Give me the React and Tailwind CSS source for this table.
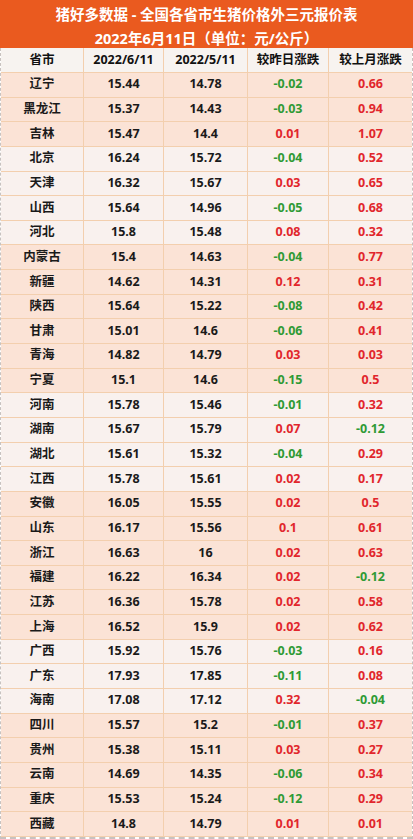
const GROUPS = [
  [
    ["辽宁", "15.44", "14.78", "-0.02", "0.66"],
    ["黑龙江", "15.37", "14.43", "-0.03", "0.94"],
    ["吉林", "15.47", "14.4", "0.01", "1.07"],
  ],
  [
    ["北京", "16.24", "15.72", "-0.04", "0.52"],
    ["天津", "16.32", "15.67", "0.03", "0.65"],
    ["山西", "15.64", "14.96", "-0.05", "0.68"],
    ["河北", "15.8", "15.48", "0.08", "0.32"],
  ],
  [
    ["内蒙古", "15.4", "14.63", "-0.04", "0.77"],
    ["新疆", "14.62", "14.31", "0.12", "0.31"],
    ["陕西", "15.64", "15.22", "-0.08", "0.42"],
    ["甘肃", "15.01", "14.6", "-0.06", "0.41"],
    ["青海", "14.82", "14.79", "0.03", "0.03"],
    ["宁夏", "15.1", "14.6", "-0.15", "0.5"],
  ],
  [
    ["河南", "15.78", "15.46", "-0.01", "0.32"],
    ["湖南", "15.67", "15.79", "0.07", "-0.12"],
    ["湖北", "15.61", "15.32", "-0.04", "0.29"],
    ["江西", "15.78", "15.61", "0.02", "0.17"],
  ],
  [
    ["安徽", "16.05", "15.55", "0.02", "0.5"],
    ["山东", "16.17", "15.56", "0.1", "0.61"],
    ["浙江", "16.63", "16", "0.02", "0.63"],
    ["福建", "16.22", "16.34", "0.02", "-0.12"],
    ["江苏", "16.36", "15.78", "0.02", "0.58"],
    ["上海", "16.52", "15.9", "0.02", "0.62"],
  ],
  [
    ["广西", "15.92", "15.76", "-0.03", "0.16"],
    ["广东", "17.93", "17.85", "-0.11", "0.08"],
    ["海南", "17.08", "17.12", "0.32", "-0.04"],
  ],
  [
    ["四川", "15.57", "15.2", "-0.01", "0.37"],
    ["贵州", "15.38", "15.11", "0.03", "0.27"],
    ["云南", "14.69", "14.35", "-0.06", "0.34"],
    ["重庆", "15.53", "15.24", "-0.12", "0.29"],
    ["西藏", "14.8", "14.79", "0.01", "0.01"],
  ],
];

const HEADERS = ["省市", "2022/6/11", "2022/5/11", "较昨日涨跌", "较上月涨跌"];
const COLS = "grid grid-cols-[83px_80px_84px_81px_1fr]";
const FONT = { fontFamily: '"Noto Sans", "Noto Sans CJK SC", sans-serif' };

function changeColor(value) {
  return value.startsWith("-") ? "text-[#2f9a35]" : "text-[#e1262c]";
}

export default function App() {
  return (
    <div className="w-[413px] bg-white" style={FONT}>
      <div className="flex h-[48px] flex-col items-center bg-[#ea5a1f] pt-[3px] text-[14.5px] font-bold leading-[23.5px] text-white">
        <p>猪好多数据 - 全国各省市生猪价格外三元报价表</p>
        <p>2022年6月11日（单位：元/公斤）</p>
      </div>

      <div className="border-x border-b-2 border-dashed border-[#c8c2bf]">
        <div className={`${COLS} h-[25px] border-b border-[#f3cfae] bg-[#f7f3f0] text-[12.5px] font-bold text-[#111]`}>
          {HEADERS.map((label, i) => (
            <div
              key={label}
              className={`flex items-center justify-center ${i < 4 ? "border-r border-[#f3cfae]" : ""}`}
            >
              {label}
            </div>
          ))}
        </div>

        {GROUPS.map((group, g) =>
          group.map(([province, today, lastMonth, dayChange, monthChange]) => (
            <div
              key={province}
              className={`${COLS} h-[24.65px] border-b border-[#f3cfae] text-[12.5px] font-bold text-[#1a1a1a] ${
                g % 2 === 0 ? "bg-[#fbe3d6]" : "bg-[#f9f1ee]"
              }`}
            >
              <div className="flex items-center justify-center border-r border-[#f3cfae]">{province}</div>
              <div className="flex items-center justify-center border-r border-[#f3cfae]">{today}</div>
              <div className="flex items-center justify-center border-r border-[#f3cfae]">{lastMonth}</div>
              <div className={`flex items-center justify-center border-r border-[#f3cfae] ${changeColor(dayChange)}`}>
                {dayChange}
              </div>
              <div className={`flex items-center justify-center ${changeColor(monthChange)}`}>{monthChange}</div>
            </div>
          ))
        )}
      </div>
    </div>
  );
}
